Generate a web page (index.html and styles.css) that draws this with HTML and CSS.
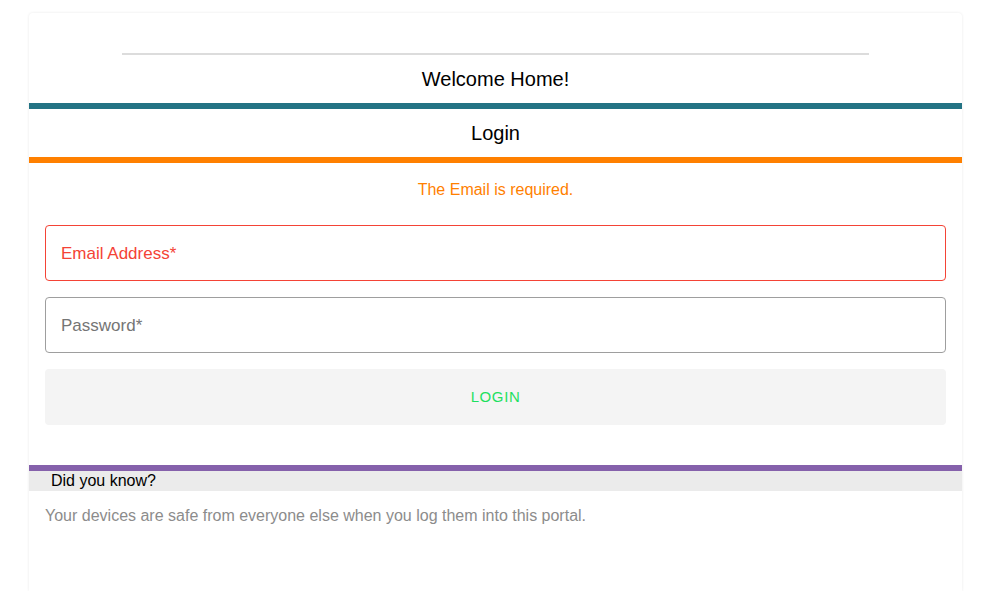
FILE: index.html
```html
<!DOCTYPE html>
<html lang="en">
<head>
<meta charset="utf-8">
<title>Login</title>
<link rel="stylesheet" href="styles.css">
</head>
<body>
<main class="card">
  <hr class="divider">
  <h1 class="title">Welcome Home!</h1>
  <div class="bar bar-teal"></div>
  <h2 class="title">Login</h2>
  <div class="bar bar-orange"></div>
  <form class="form">
    <p class="error">The Email is required.</p>
    <label class="field field-error"><span class="label">Email Address*</span></label>
    <label class="field"><span class="label">Password*</span></label>
    <button type="button" class="btn">LOGIN</button>
  </form>
  <section class="tip">
    <div class="bar bar-purple"></div>
    <h3 class="tip-head">Did you know?</h3>
    <p class="tip-body">Your devices are safe from everyone else when you log them into this portal.</p>
  </section>
</main>
</body>
</html>
```

FILE: styles.css
```css
html, body {
  margin: 0;
  padding: 0;
  background: #ffffff;
}
body {
  padding: 13px 15px 0 0;
  font-family: "Liberation Sans", Arial, sans-serif;
  overflow: hidden;
}
.card {
  width: 933px;
  min-height: calc(100vh - 13px);
  margin: 0 auto;
  padding-top: 40px;
  box-sizing: border-box;
  background: #fff;
  border-radius: 4px 4px 0 0;
  box-shadow: 0 0 3px rgba(0, 0, 0, 0.09);
}
.divider {
  width: 80%;
  height: 2px;
  margin: 0 auto;
  border: 0;
  background: #dcdcdc;
}
.title {
  margin: 0;
  height: 48px;
  display: flex;
  align-items: center;
  justify-content: center;
  font-size: 20px;
  font-weight: normal;
  color: #000;
}
.bar {
  height: 6px;
}
.bar-teal { background: #237384; }
.bar-orange { background: #ff8000; }
.bar-purple { background: #8561ab; }
.form {
  display: flex;
  flex-direction: column;
  gap: 16px;
  padding: 17px 16px 0;
}
.error {
  margin: 0 0 9px;
  line-height: 20px;
  font-size: 16px;
  text-align: center;
  color: #ff8000;
}
.field {
  height: 56px;
  box-sizing: border-box;
  border: 1px solid #9e9e9e;
  border-radius: 4px;
  display: flex;
  align-items: center;
  padding: 2px 15px 0;
}
.field-error {
  border-color: #f44336;
}
.label {
  font-size: 17px;
  color: #757575;
}
.field-error .label {
  color: #f44336;
}
.btn {
  height: 56px;
  border: 0;
  border-radius: 4px;
  background: #f4f4f4;
  font-family: "Liberation Sans", Arial, sans-serif;
  font-size: 15px;
  letter-spacing: 0.6px;
  color: #1ee060;
  padding: 0 0 2px;
}
.tip {
  margin-top: 40px;
}
.tip-head {
  margin: 0;
  background: #ebebeb;
  font-size: 16px;
  font-weight: normal;
  line-height: 20px;
  padding-left: 22px;
  color: #000;
}
.tip-body {
  margin: 0;
  padding: 15px 16px 0;
  font-size: 16px;
  line-height: 20px;
  color: #8c8c8c;
}
```
